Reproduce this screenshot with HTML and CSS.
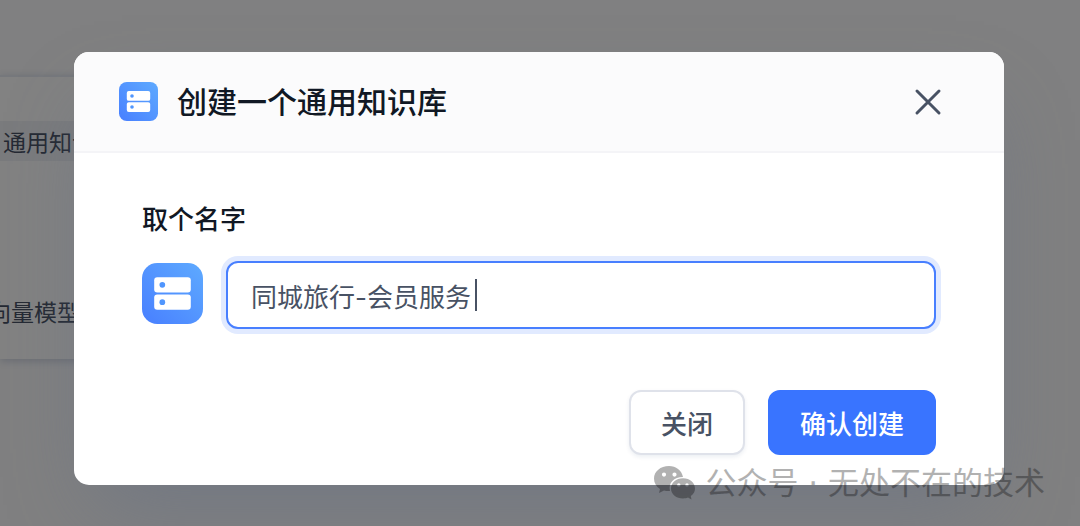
FILE: index.html
```html
<!DOCTYPE html>
<html lang="zh-CN">
<head>
    <meta charset="UTF-8">
    <meta name="viewport" content="width=device-width, initial-scale=1.0">
    <title>创建一个通用知识库</title>
    <link rel="stylesheet" href="styles.css">
</head>
<body>
    <main class="page">
        <div class="panel">
            <div class="panel-item active">通用知识库</div>
            <div class="panel-note">向量模型</div>
        </div>
    </main>

    <div class="overlay">
        <section class="modal" role="dialog" aria-labelledby="modalTitle">
            <header class="modal-header">
                <svg class="dataset-icon small" viewBox="0 0 60 60" aria-hidden="true">
                    <defs>
                        <linearGradient id="datasetFill" x1="0" y1="1" x2="1" y2="0">
                            <stop offset="0" stop-color="#487FFF"/>
                            <stop offset="1" stop-color="#5EAAFF"/>
                        </linearGradient>
                    </defs>
                    <rect width="60" height="60" rx="12" fill="url(#datasetFill)"/>
                    <rect x="12" y="14" width="36" height="15" rx="3" fill="#fff"/>
                    <rect x="12" y="31" width="36" height="15" rx="3" fill="#fff"/>
                    <circle cx="20" cy="21.500" r="2.800" fill="#5096FE"/>
                    <circle cx="20" cy="38.500" r="2.800" fill="#5096FE"/>
                </svg>
                <h1 id="modalTitle">创建一个通用知识库</h1>
                <button class="close" type="button" aria-label="关闭">
                    <svg viewBox="0 0 28 28" aria-hidden="true">
                        <path d="M3 3L25 25M25 3L3 25"/>
                    </svg>
                </button>
            </header>

            <form class="modal-body">
                <label for="datasetName">取个名字</label>
                <div class="name-row">
                    <svg class="dataset-icon large" viewBox="0 0 60 60" aria-hidden="true">
                        <rect width="60" height="60" rx="15" fill="url(#datasetFill)"/>
                        <rect x="12" y="14" width="36" height="15" rx="3" fill="#fff"/>
                        <rect x="12" y="31" width="36" height="15" rx="3" fill="#fff"/>
                        <circle cx="20" cy="21.500" r="2.800" fill="#5096FE"/>
                        <circle cx="20" cy="38.500" r="2.800" fill="#5096FE"/>
                    </svg>
                    <div class="field">
                        <input id="datasetName" type="text" value="同城旅行-会员服务">
                        <span class="caret"></span>
                    </div>
                </div>
                <div class="actions">
                    <button class="btn" type="button">关闭</button>
                    <button class="btn primary" type="button">确认创建</button>
                </div>
            </form>
        </section>
    </div>

    <div class="watermark">
        <svg viewBox="0 0 42 34" aria-hidden="true">
            <path fill-rule="evenodd" d="M15 0C6.500 0 0 5.500 0 12.500C0 17 2.300 20.500 6 23L5 27L10 24.500C12 25 14 25.200 16 25C14 17 20 11 29 11C27.500 4 22 0 15 0ZM10 6.500a2.100 2.100 0 1 1 0 4.200a2.100 2.100 0 1 1 0-4.200ZM20.500 6.500a2.100 2.100 0 1 1 0 4.200a2.100 2.100 0 1 1 0-4.200Z"/>
            <path fill-rule="evenodd" d="M29 12.200C22 12.200 17 17 17 22.500C17 28.500 22.500 32.500 29 32.500C31 32.500 32.500 32.200 34 31.600L37.500 33.500L36.800 30C39.500 28 41 25.500 41 22.500C41 17 36 12.200 29 12.200ZM24.800 17.200a1.700 1.700 0 1 1 0 3.400a1.700 1.700 0 1 1 0-3.400ZM33 17.200a1.700 1.700 0 1 1 0 3.400a1.700 1.700 0 1 1 0-3.400Z"/>
        </svg>
        <span>公众号 · 无处不在的技术</span>
    </div>
</body>
</html>
```

FILE: styles.css
```css
* {
    box-sizing: border-box;
}

body {
    margin: 0;
    min-height: 100vh;
    background-color: #fbfbfd;
    font-family: "Noto Sans CJK SC", sans-serif;
    color: #111824;
    overflow: hidden;
}

/* page behind the dialog */
.page {
    padding-top: 75px;
}

.panel {
    width: 50%;
    height: 284px;
    padding-top: 44px;
    border-top: 2px solid #e8ebf4;
    background-color: #fff;
    box-shadow: 0 2px 8px rgba(19, 51, 107, 0.2);
    font-size: 23px;
    line-height: 40px;
    color: #485264;
}

.panel-item {
    padding-left: 3px;
}

.panel-item.active {
    background-color: #f0f1f6;
}

.panel-note {
    margin-top: 130px;
    margin-left: -12px;
}

.overlay {
    position: absolute;
    inset: 0;
    padding: 52px 76px 40px 74px;
    background-color: rgba(0, 0, 0, 0.49);
}

.modal {
    border-radius: 15px;
    background-color: #fff;
    box-shadow: 0 40px 80px -20px rgba(96, 108, 132, 0.45);
    overflow: hidden;
}

.modal-header {
    display: flex;
    align-items: center;
    gap: 19px;
    height: 101px;
    padding: 0 62px 0 45px;
    border-bottom: 2px solid #f4f4f7;
    background-color: #fbfbfc;
}

.modal-header h1 {
    flex: 1;
    margin: 0 0 4px;
    font-size: 30px;
    font-weight: 500;
    line-height: 40px;
}

.dataset-icon {
    flex: none;
}

.dataset-icon.small {
    width: 39px;
    height: 39px;
}

.dataset-icon.large {
    width: 61px;
    height: 61px;
    margin-bottom: 3px;
}

.close {
    display: flex;
    padding: 0;
    border: none;
    background: none;
    cursor: pointer;
}

.close svg {
    width: 28px;
    height: 28px;
    fill: none;
    stroke: #485264;
    stroke-width: 3;
    stroke-linecap: round;
}

.modal-body {
    padding: 45px 68px 30px;
}

.modal-body label {
    display: block;
    font-size: 26px;
    font-weight: 500;
    line-height: 40px;
}

.name-row {
    display: flex;
    align-items: center;
    gap: 23px;
    margin-top: 23px;
}

.field {
    position: relative;
    flex: 1;
}

.field input {
    display: block;
    width: 100%;
    height: 68px;
    padding: 0 23px;
    border: 2px solid #487fff;
    border-radius: 12px;
    outline: none;
    background-color: #fff;
    box-shadow: 0 0 0 5px #e1eaff;
    font-family: Inter, "Noto Sans CJK SC", sans-serif;
    font-size: 26px;
    color: #485264;
    caret-color: transparent;
}

.caret {
    position: absolute;
    top: 18px;
    left: 249px;
    width: 2px;
    height: 32px;
    background-color: #485264;
}

.actions {
    display: flex;
    justify-content: flex-end;
    gap: 23px;
    margin-top: 61px;
}

.btn {
    height: 65px;
    padding: 0 30px;
    border: 2px solid #dfe2ea;
    border-radius: 12px;
    background-color: #fff;
    box-shadow: 0 2px 4px rgba(19, 51, 107, 0.08);
    font-family: inherit;
    font-size: 26px;
    font-weight: 500;
    color: #485264;
    cursor: pointer;
}

.btn.primary {
    border-color: #3974ff;
    background-color: #3974ff;
    box-shadow: none;
    color: #fff;
}

.watermark {
    position: absolute;
    right: 35px;
    bottom: 21px;
    display: flex;
    align-items: center;
    gap: 9px;
    font-family: "DejaVu Sans", "Noto Sans CJK SC", sans-serif;
    font-size: 31px;
    font-weight: 400;
    line-height: 44px;
    color: #000;
    opacity: 0.3;
}

.watermark svg {
    width: 42px;
    height: 34px;
    fill: #000;
}
```
